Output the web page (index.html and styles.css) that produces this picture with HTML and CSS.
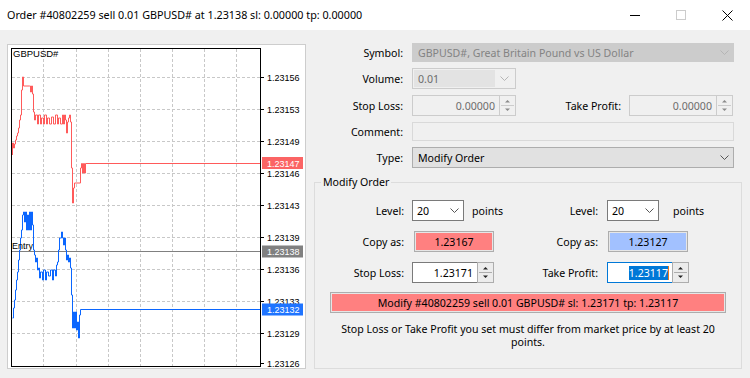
FILE: index.html
```html
<!DOCTYPE html>
<html lang="en">
<head>
  <meta charset="UTF-8" />
  <title>Order #40802259</title>
  <link rel="stylesheet" href="styles.css">
</head>
<body>
  <div class="titlebar">
    <div class="title">Order #40802259 sell 0.01 GBPUSD# at 1.23138 sl: 0.00000 tp: 0.00000</div>
    <div class="win-btns">
      <div class="win-btn"><svg width="10" height="10"><path d="M0 5.5h10" stroke="#000"/></svg></div>
      <div class="win-btn"><svg width="10" height="10"><rect x="0.5" y="0.5" width="9" height="9" fill="none" stroke="#cccccc"/></svg></div>
      <div class="win-btn"><svg width="11" height="11"><path d="M0.5 0.5l10 10M10.5 0.5l-10 10" stroke="#000"/></svg></div>
    </div>
  </div>

  <div class="main">
    <!-- tick chart -->
    <div class="chart-panel">
      <svg width="297" height="323" viewBox="8 45 297 323">
        <path class="grid-lines" d="M12 77.5H260M12 109.5H260M12 141.5H260M12 173.5H260M12 205.5H260M12 237.5H260M12 269.5H260M12 301.5H260M12 333.5H260M43.5 49V366M76.5 49V366M108.5 49V366M140.5 49V366M172.5 49V366M204.5 49V366M236.5 49V366"/>
        <path d="M12 251.5H260" stroke="#808080" fill="none"/>
        <path class="series-red" d="M12.5 155V143H13.5V148H14.5V144H15.5V140H16.5V136H17.5V133H18.5V128H19.5V120H20.5V115H21.5V90H22.5V77H23.5V86H29.5V86H30.5V92H31.5V86H32.5V94H33.5V112H34.5V120H35.5V115H37.5V124H38.5V115H40.5V124H41.5V118H43.5V124H44.5V115H46.5V124H47.5V118H49.5V124H51.5V117H53.5V124H55.5V115H57.5V124H58.5V118H60.5V124H62.5V115H63.5V124H64.5V115H65.5V120H66.5V133H67.5V122H68.5V118H69.5V115H70.5V122H71.5V168H72.5V203H73.5V188H74.5V183H80.5V168H81.5V163.5H82.5V173H83.5V163.5H84.5V173H85.5V163.5H260"/>
        <path class="series-blue" d="M12.5 318H13.5V308H14.5V300H15.5V290H16.5V280H17.5V272H18.5V260H19.5V250H20.5V238H21.5V230H22.5V215H23.5V212H24.5V222H25.5V212H26.5V230H27.5V215H28.5V230H29.5V212H30.5V230H31.5V212H32.5V225H33.5V250H34.5V255H35.5V262H36.5V258H37.5V270H38.5V268H39.5V278H40.5V272H42.5V280H43.5V270H45.5V280H46.5V272H48.5V276H50.5V270H52.5V280H53.5V270H55.5V276H56.5V265H57.5V262H58.5V250H59.5V238H61.5V232H62.5V238H63.5V245H64.5V238H65.5V250H66.5V260H67.5V255H68.5V262H69.5V258H70.5V268H71.5V295H72.5V328H73.5V312H74.5V328H75.5V312H76.5V330H77.5V322H78.5V338H79.5V315H80.5V309.5H260"/>
        <rect x="11.5" y="48.5" width="249" height="318" fill="none" stroke="#000"/>
        <path d="M260 77.5h4M260 109.5h4M260 141.5h4M260 173.5h4M260 205.5h4M260 237.5h4M260 269.5h4M260 301.5h4M260 333.5h4M260 363.5h4" stroke="#000"/>
        <text x="13" y="57" class="sym">GBPUSD#</text>
        <text x="12" y="249" class="entry">Entry</text>
        <text x="267" y="80.5">1.23156</text>
        <text x="267" y="112.5">1.23153</text>
        <text x="267" y="144.5">1.23149</text>
        <text x="267" y="176.5">1.23146</text>
        <text x="267" y="208.5">1.23143</text>
        <text x="267" y="240.5">1.23139</text>
        <text x="267" y="272.5">1.23136</text>
        <text x="267" y="304.5">1.23133</text>
        <text x="267" y="336.5">1.23129</text>
        <text x="267" y="366.5">1.23126</text>
        <rect x="262" y="157" width="41" height="12" fill="#fb6464"/>
        <text x="267" y="166.5" class="tag">1.23147</text>
        <rect x="262" y="245.5" width="41" height="12" fill="#808080"/>
        <text x="267" y="255" class="tag">1.23138</text>
        <rect x="262" y="303.5" width="41" height="12" fill="#1f74ff"/>
        <text x="267" y="313" class="tag">1.23132</text>
      </svg>
    </div>

    <!-- order form -->
    <div class="form">
      <div class="row">
        <div class="lbl">Symbol:</div>
        <div class="combo combo-symbol">
          <span class="val">GBPUSD#, Great Britain Pound vs US Dollar</span>
          <span class="chev"><svg width="9" height="5"><polyline points="0.5,0.5 4.5,4.5 8.5,0.5" fill="none" stroke="#b5b5b5"/></svg></span>
        </div>
      </div>
      <div class="row">
        <div class="lbl">Volume:</div>
        <div class="combo combo-volume">
          <span class="val">0.01</span>
          <span class="chev"><svg width="9" height="5"><polyline points="0.5,0.5 4.5,4.5 8.5,0.5" fill="none" stroke="#b5b5b5"/></svg></span>
        </div>
      </div>
      <div class="row">
        <div class="lbl">Stop Loss:</div>
        <div class="spin spin-off spin-wide">
          <span class="num">0.00000</span>
          <span class="arrows"><svg width="15" height="19"><path d="M1 9.5h13" stroke="#cccccc"/><path d="M5 6.5l2.5-2.5 2.5 2.5z" fill="#8a8a8a"/><path d="M5 12.5l2.5 2.5 2.5-2.5z" fill="#8a8a8a"/></svg></span>
        </div>
        <div class="lbl lbl-tp">Take Profit:</div>
        <div class="spin spin-off spin-wide">
          <span class="num">0.00000</span>
          <span class="arrows"><svg width="15" height="19"><path d="M1 9.5h13" stroke="#cccccc"/><path d="M5 6.5l2.5-2.5 2.5 2.5z" fill="#8a8a8a"/><path d="M5 12.5l2.5 2.5 2.5-2.5z" fill="#8a8a8a"/></svg></span>
        </div>
      </div>
      <div class="row">
        <div class="lbl">Comment:</div>
        <div class="field-comment"></div>
      </div>
      <div class="row">
        <div class="lbl">Type:</div>
        <div class="combo combo-type">
          <span class="val">Modify Order</span>
          <span class="chev"><svg width="9" height="5"><polyline points="0.5,0.5 4.5,4.5 8.5,0.5" fill="none" stroke="#555"/></svg></span>
        </div>
      </div>

      <fieldset class="group">
        <legend>Modify Order</legend>
        <div class="group-grid">
          <div class="glbl">Level:</div>
          <div class="cell">
            <div class="combo combo-level">
              <span class="val">20</span>
              <span class="chev"><svg width="9" height="5"><polyline points="0.5,0.5 4.5,4.5 8.5,0.5" fill="none" stroke="#555"/></svg></span>
            </div>
            <span class="points">points</span>
          </div>
          <div class="glbl glbl-r">Level:</div>
          <div class="cell">
            <div class="combo combo-level">
              <span class="val">20</span>
              <span class="chev"><svg width="9" height="5"><polyline points="0.5,0.5 4.5,4.5 8.5,0.5" fill="none" stroke="#555"/></svg></span>
            </div>
            <span class="points points-r">points</span>
          </div>

          <div class="glbl">Copy as:</div>
          <div class="cell"><div class="copy copy-red"><span>1.23167</span></div></div>
          <div class="glbl glbl-r">Copy as:</div>
          <div class="cell"><div class="copy copy-blue"><span>1.23127</span></div></div>

          <div class="glbl">Stop Loss:</div>
          <div class="cell">
            <div class="spin spin-small">
              <span class="num">1.23171</span>
              <span class="arrows"><svg width="15" height="19"><path d="M1 9.5h13" stroke="#adadad"/><path d="M5 6.5l2.5-2.5 2.5 2.5z" fill="#222"/><path d="M5 12.5l2.5 2.5 2.5-2.5z" fill="#222"/></svg></span>
            </div>
          </div>
          <div class="glbl glbl-r">Take Profit:</div>
          <div class="cell">
            <div class="spin spin-small spin-focus">
              <span class="num"><span class="sel">1.23117</span><span class="caret"></span></span>
              <span class="arrows"><svg width="15" height="19"><path d="M1 9.5h13" stroke="#adadad"/><path d="M5 6.5l2.5-2.5 2.5 2.5z" fill="#222"/><path d="M5 12.5l2.5 2.5 2.5-2.5z" fill="#222"/></svg></span>
            </div>
          </div>
        </div>

        <div class="modify-btn"><span>Modify #40802259 sell 0.01 GBPUSD# sl: 1.23171 tp: 1.23117</span></div>
        <p class="note">Stop Loss or Take Profit you set must differ from market price by at least 20 points.</p>
      </fieldset>
    </div>
  </div>
</body>
</html>
```

FILE: styles.css
```css
body {
  margin: 0;
  width: 750px;
  height: 378px;
  overflow: hidden;
  background: #f0f0f0;
  font-family: "Noto Sans", "Liberation Sans", sans-serif;
  font-size: 10.6px;
  color: #000;
}

/* window title */
.titlebar {
  display: flex;
  align-items: center;
  height: 30px;
  background: #fff;
}
.title {
  flex: 1;
  padding-left: 7px;
  font-size: 10.75px;
  white-space: nowrap;
}
.win-btns {
  display: flex;
  height: 30px;
}
.win-btn {
  width: 46px;
  display: flex;
  align-items: center;
  justify-content: center;
}
.win-btn svg { display: block; }

.main {
  display: flex;
  align-items: flex-start;
}

/* chart */
.chart-panel {
  width: 299px;
  height: 325px;
  margin: 14px 0 0 7px;
  box-sizing: border-box;
  border: 1px solid #cdcdcd;
  background: #fff;
}
.chart-panel svg { display: block; }
.chart-panel text {
  font-family: "Liberation Sans", sans-serif;
  font-size: 9px;
  fill: #000;
}
.chart-panel text.sym { font-size: 9.5px; }
.chart-panel text.tag { fill: #fff; }
.grid-lines {
  stroke: #c8c8c8;
  stroke-dasharray: 3 2;
  fill: none;
}
.series-red {
  stroke: #ff5a5a;
  fill: none;
}
.series-blue {
  stroke: #0a66ff;
  fill: none;
}

/* form */
.form {
  width: 428px;
  margin: 13px 0 0 8px;
  display: flex;
  flex-direction: column;
  gap: 6px;
}
.row {
  display: flex;
  align-items: center;
}
.lbl {
  width: 98px;
  box-sizing: border-box;
  padding-right: 9px;
  text-align: right;
  white-space: nowrap;
}
.lbl-tp {
  width: 113px;
  padding-right: 8px;
}

.combo {
  display: flex;
  align-items: center;
  box-sizing: border-box;
  height: 21px;
  border: 1px solid #7a7a7a;
  background: #fff;
}
.combo .val {
  flex: 1;
  padding-left: 5px;
  white-space: nowrap;
}
.combo .chev {
  width: 18px;
  display: flex;
  justify-content: center;
}
.combo .chev svg { display: block; }
.combo-symbol {
  width: 322px;
  height: 19px;
  background: #cccccc;
  border-color: #cccccc;
  color: #838383;
}
.combo-volume {
  width: 104px;
  padding: 1px;
  border-color: #cccccc;
  background: #f0f0f0;
  color: #6d6d6d;
}
.combo-volume .val {
  align-self: stretch;
  display: flex;
  align-items: center;
  padding-left: 4px;
  background: #e3e3e3;
}
.combo-volume .chev { width: 19px; }
.combo-type {
  width: 322px;
  background: #e1e1e1;
  border-color: #adadad;
}
.combo-level { width: 52px; }
.combo-level .val { padding-left: 4px; }

.spin {
  display: flex;
  height: 21px;
}
.spin .num {
  flex: 1;
  display: flex;
  align-items: center;
  justify-content: flex-end;
  padding-right: 4px;
  border: 1px solid #7a7a7a;
  border-right: none;
  background: #fff;
}
.spin .arrows {
  width: 17px;
  box-sizing: border-box;
  border: 1px solid #adadad;
  background: #ececec;
}
.spin .arrows svg { display: block; }
.spin-wide { width: 104px; }
.spin-off .num {
  border-color: #cccccc;
  background: #f0f0f0;
  color: #6d6d6d;
}
.spin-off .arrows {
  border-color: #cccccc;
  background: #f0f0f0;
}
.spin-small { width: 82px; }
.spin-focus .num {
  border-color: #0078d7;
  padding-right: 3px;
}
.sel {
  background: #0078d7;
  color: #fff;
  line-height: 14px;
}
.caret {
  width: 1px;
  height: 14px;
  background: #e87a1e;
}
.field-comment {
  width: 322px;
  height: 19px;
  box-sizing: border-box;
  border: 1px solid #d9d9d9;
  background: #f0f0f0;
}

/* Modify Order group */
.group {
  margin: 1px 0 0;
  padding: 0;
  min-width: 0;
  height: 194px;
  box-sizing: border-box;
  border: 1px solid #dcdcdc;
}
.group legend {
  margin-left: 6px;
  padding: 0 2px;
  line-height: 14px;
}
.group-grid {
  display: grid;
  grid-template-columns: 97px 130px 65px 1fr;
  grid-auto-rows: 21px;
  row-gap: 10px;
  align-items: center;
  margin-top: 11px;
}
.glbl {
  text-align: right;
  padding-right: 8px;
  white-space: nowrap;
}
.glbl-r { padding-right: 9px; }
.cell {
  display: flex;
  align-items: center;
}
.points { margin-left: 8px; }
.points-r { margin-left: 14px; }

.copy {
  width: 80px;
  height: 21px;
  box-sizing: border-box;
  margin-left: 2px;
  padding: 1px;
  border: 1px solid #adadad;
  background: #e6e6e6;
}
.copy span {
  display: flex;
  align-items: center;
  justify-content: center;
  height: 100%;
  background: #ff8080;
}
.copy-blue { margin-left: 1px; }
.copy-blue span { background: #a2c1ff; }

.modify-btn {
  width: 396px;
  height: 21px;
  margin: 9px 0 0 15px;
  box-sizing: border-box;
  padding: 1px;
  border: 1px solid #adadad;
  background: #e6e6e6;
}
.modify-btn span {
  display: flex;
  align-items: center;
  justify-content: center;
  height: 100%;
  background: #ff8080;
  white-space: nowrap;
}
.note {
  margin: 10px 0 0;
  padding: 0 20px;
  text-align: center;
  line-height: 13px;
}
```
